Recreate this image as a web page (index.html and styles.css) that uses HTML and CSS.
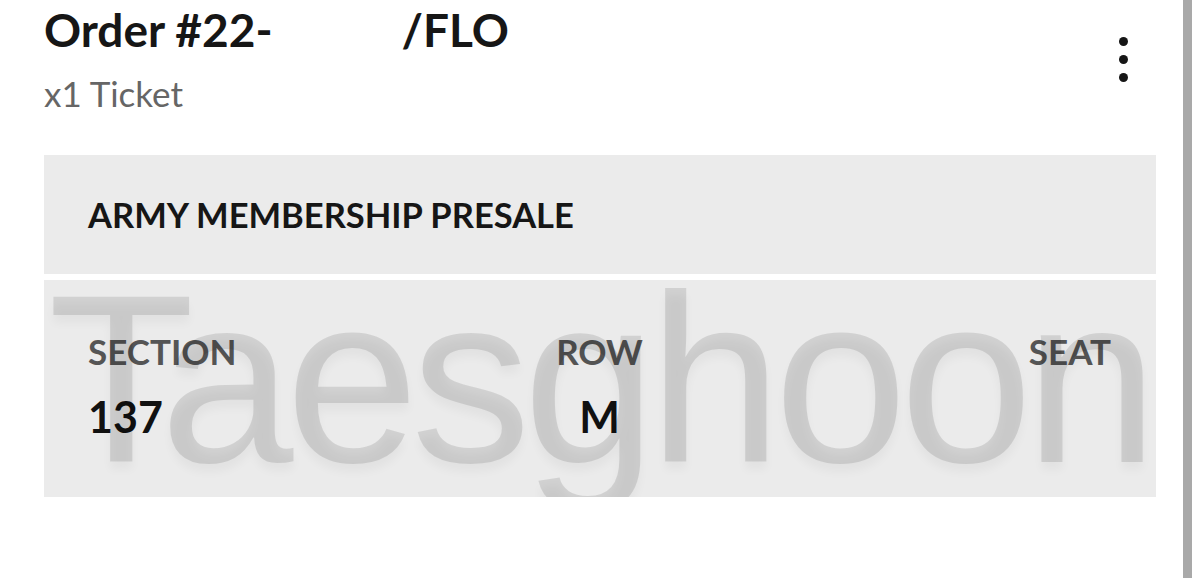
FILE: index.html
```html
<!DOCTYPE html>
<html lang="en">
<head>
<meta charset="utf-8">
<title>Order</title>
<link rel="stylesheet" href="styles.css">
</head>
<body>
<div class="page">
  <main class="main">
    <header class="head">
      <div class="titles">
        <h1 class="title">Order #22-<span class="redact"></span>/FLO</h1>
        <div class="sub">x1 Ticket</div>
      </div>
      <div class="kebab" aria-label="More options">
        <span class="dot"></span><span class="dot"></span><span class="dot"></span>
      </div>
    </header>
    <section class="panel presale">ARMY MEMBERSHIP PRESALE</section>
    <section class="panel seats">
      <div class="col col-left">
        <div class="label">SECTION</div>
        <div class="value">137</div>
      </div>
      <div class="col col-mid">
        <div class="label">ROW</div>
        <div class="value">M</div>
      </div>
      <div class="col col-right">
        <div class="label">SEAT</div>
        <div class="value">&nbsp;</div>
      </div>
      <div class="watermark">Taesghoon</div>
    </section>
  </main>
  <div class="scrollbar"></div>
</div>
</body>
</html>
```
FILE: styles.css
```css
html, body {
  margin: 0;
  padding: 0;
  background: #fff;
}
body {
  font-family: "Lato", "Open Sans", sans-serif;
  color: #161616;
  width: 1200px;
  height: 578px;
  overflow: hidden;
}
.page {
  display: flex;
  height: 578px;
}
.main {
  flex: 1;
  padding: 0 27px 0 44px;
}
.scrollbar {
  width: 9px;
  background: #a9a9a9;
  margin-right: 8px;
}
.head {
  display: flex;
  justify-content: space-between;
  align-items: flex-start;
  height: 155px;
}
.title {
  margin: 0;
  padding-top: 5px;
  font-size: 46px;
  font-weight: 700;
  line-height: 50px;
  color: #161616;
}
.redact {
  display: inline-block;
  width: 129px;
}
.sub {
  font-size: 35px;
  line-height: 40px;
  color: #666;
  margin-top: 18px;
}
.kebab {
  display: flex;
  flex-direction: column;
  gap: 9px;
  padding-top: 37px;
  margin-right: 28px;
}
.dot {
  width: 9px;
  height: 9px;
  border-radius: 50%;
  background: #161616;
}
.panel {
  background: #ebebeb;
}
.presale {
  height: 119px;
  box-sizing: border-box;
  padding-left: 44px;
  display: flex;
  align-items: center;
  font-size: 34.5px;
  font-weight: 700;
  color: #161616;
}
.seats {
  position: relative;
  margin-top: 6px;
  height: 217px;
  box-sizing: border-box;
  padding: 51px 45px 0 44px;
  display: grid;
  grid-template-columns: 1fr auto 1fr;
  overflow: hidden;
}
.col-mid {
  text-align: center;
}
.col-right {
  text-align: right;
}
.label {
  font-size: 35px;
  font-weight: 700;
  color: #555;
  line-height: 40px;
}
.value {
  font-size: 43px;
  font-weight: 700;
  color: #111;
  line-height: 48px;
  margin-top: 22px;
}
.watermark {
  position: absolute;
  left: 4px;
  top: -21px;
  font-family: "Liberation Sans", Arial, sans-serif;
  font-size: 240px;
  line-height: 240px;
  color: rgba(0, 0, 0, 0.11);
  letter-spacing: -8px;
  text-shadow: 0 8px 10px rgba(0, 0, 0, 0.04);
  pointer-events: none;
  white-space: nowrap;
}
```
